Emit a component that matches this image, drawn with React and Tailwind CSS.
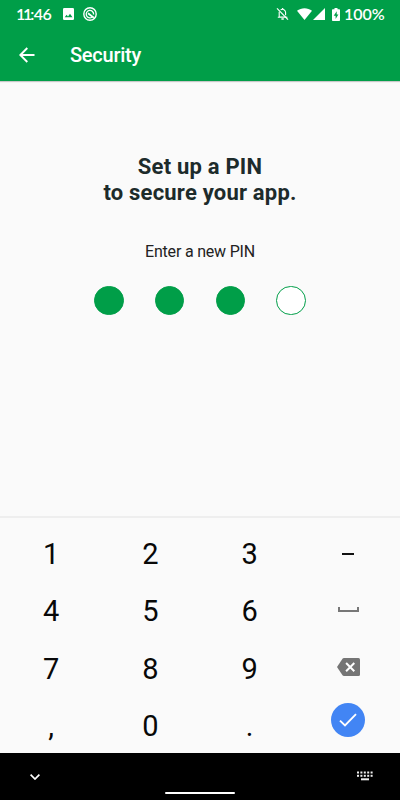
import React from 'react';

const ImageIcon = () => (
  <svg className="w-[11px] h-[12px]" viewBox="0 0 11 12" fill="none">
    <rect width="11" height="12" rx="1.3" fill="#fff" />
    <path d="M1.700 9.200 3.600 6.800l1.400 1.600 2-2.600 2.500 3.400z" fill="#009e48" />
  </svg>
);

const TargetIcon = () => (
  <svg className="w-[14px] h-[14px]" viewBox="0 0 14 14" fill="none" stroke="#fff">
    <circle cx="7" cy="7" r="6.200" strokeWidth="1.400" />
    <path d="M9 10.200A3.700 3.700 0 1 1 10.600 7.500" strokeWidth="1.300" />
    <path d="M5 6.200 10.800 10.800" strokeWidth="1.800" />
  </svg>
);

const BellOffIcon = () => (
  <svg className="w-[13px] h-[14px]" viewBox="0 0 13 14" fill="none" stroke="#fff">
    <path d="M3.200 4.700v5.300h7.200M4.600 2.900C7 1.400 9.600 3 9.600 5.600v2.600M1.800 10.200h9.600" strokeWidth="1.100" />
    <path d="M1 1.400l11 11.200" strokeWidth="1.200" />
    <path d="M5.400 12h2.400M6.600 1v1.200" strokeWidth="1.300" />
  </svg>
);

const WifiIcon = () => (
  <svg className="w-[15px] h-[12px]" viewBox="0 0 15 12" fill="#fff">
    <path d="M0 2.700C4.300-.7 10.700-.7 15 2.700L7.500 12z" />
  </svg>
);

const SignalIcon = () => (
  <svg className="w-[12px] h-[12px]" viewBox="0 0 12 12" fill="#fff">
    <path d="M12 0v12H0z" />
  </svg>
);

const BatteryIcon = () => (
  <svg className="w-[8px] h-[13px]" viewBox="0 0 8 13">
    <path d="M2.500 0h3v1.200H7.200a.8.8 0 0 1 .8.8v10.200a.8.8 0 0 1-.8.8H.8a.8.8 0 0 1-.8-.8V2a.8.8 0 0 1 .8-.8h1.700z" fill="#fff" />
    <path d="M4.700 3.300 1.700 7.800h1.900v3.100l2.800-4.500H4.700z" fill="#009e48" />
  </svg>
);

const BackIcon = () => (
  <svg className="w-4 h-4" viewBox="0 0 16 16" fill="none" stroke="#fff" strokeWidth="1.900">
    <path d="M15.500 8H1.500M8.300 1 1.300 8l7 7" />
  </svg>
);

const SpaceIcon = () => (
  <svg className="w-[21px] h-[5px] mb-[4px]" viewBox="0 0 21 5" fill="none" stroke="#777" strokeWidth="2">
    <path d="M1 0v4h19V0" />
  </svg>
);

const BackspaceIcon = () => (
  <svg className="w-[23px] h-[18px] mb-[4px]" viewBox="0 0 23 18">
    <path d="M7 0h14.500A1.500 1.500 0 0 1 23 1.500v15a1.500 1.500 0 0 1-1.500 1.500H7a2 2 0 0 1-1.500-.8L0 9 5.500.8A2 2 0 0 1 7 0z" fill="#757575" />
    <path d="m9.100 5 8.200 8.200M17.300 5l-8.200 8.200" stroke="#fff" strokeWidth="2" />
  </svg>
);

const CheckIcon = () => (
  <svg className="w-[18px] h-[14px]" viewBox="0 0 18 14" fill="none" stroke="#fff" strokeWidth="1.900">
    <path d="m1 7.600 5 4.900L17 1.200" />
  </svg>
);

const KeyboardIcon = () => (
  <svg className="w-4 h-[10px]" viewBox="0 0 16 10" fill="#eee">
    {[0, 3.4, 6.8, 10.2, 13.6].map((x) => (
      <React.Fragment key={x}>
        <rect x={x} y="0.500" width="2" height="2" />
        <rect x={x} y="3.800" width="2" height="2" />
      </React.Fragment>
    ))}
    <rect x="4" y="7.300" width="8" height="2" />
  </svg>
);

const keys = [
  '1', '2', '3', <div className="w-3 h-[2px] mb-[2px] bg-[#111]" />,
  '4', '5', '6', <SpaceIcon />,
  '7', '8', '9', <BackspaceIcon />,
  ',', '0', '.',
  <div className="w-[34px] h-[34px] mb-[13px] rounded-full bg-[#4285f4] flex items-center justify-center">
    <CheckIcon />
  </div>
];

const App = () => {
  const pin = [true, true, true, false];

  return (
    <div className="w-[400px] h-[800px] flex flex-col overflow-hidden bg-[#fafafa] font-['Roboto',sans-serif]">
      <header className="h-[81px] shrink-0 bg-[#009e48] text-white shadow-[0_1px_1px_rgba(0,0,0,0.2)]">
        <div className="h-7 flex items-center pl-4 pr-4 font-['Lato',sans-serif] font-semibold text-base">
          <span className="w-[47px] leading-7 tracking-[-0.5px]"><span className="tracking-[-2.2px]">11</span>:46</span>
          <ImageIcon />
          <span className="w-[9px]" />
          <TargetIcon />
          <div className="ml-auto flex items-center">
            <BellOffIcon />
            <span className="w-[8px]" />
            <WifiIcon />
            <span className="w-[1px]" />
            <SignalIcon />
            <span className="w-[7px]" />
            <BatteryIcon />
            <span className="w-[40px] ml-[4px] whitespace-nowrap">100%</span>
          </div>
        </div>
        <div className="h-[53px] flex items-center pl-[19px]">
          <BackIcon />
          <h1 className="ml-[35px] text-xl font-medium tracking-[-0.25px]">Security</h1>
        </div>
      </header>

      <main className="flex-1 flex flex-col items-center pt-[73px]">
        <h2 className="text-[22px] leading-[26px] font-bold tracking-[0.2px] text-center text-[#1d2b2b]">
          Set up a PIN<br />to secure your app.
        </h2>
        <p className="mt-[34px] text-base leading-6 tracking-[-0.2px] text-[#222]">Enter a new PIN</p>
        <div className="mt-[22px] flex gap-[31.400px]">
          {pin.map((filled, idx) => (
            <div
              key={idx}
              className={`w-[29.400px] h-[29.400px] rounded-full border border-[#009e48] ${filled ? 'bg-[#009e48]' : 'bg-white'}`}
            />
          ))}
        </div>
      </main>

      {/* Numeric keyboard */}
      <div className="h-[237px] shrink-0 border-t-2 border-[#eee] pt-[8px] pl-px pr-[2px]">
        <div className="grid grid-cols-4 auto-rows-[57.3px]">
          {keys.map((key, idx) => (
            <div key={idx} className="flex items-center justify-center text-[29px] leading-none text-[#080808]">
              {typeof key === 'string' ? <span className="pl-px">{key}</span> : key}
            </div>
          ))}
        </div>
      </div>

      <nav className="h-[47px] shrink-0 bg-black flex justify-between pl-[30px] pr-[27px]">
        <svg className="w-[10px] h-[6px] mt-[21px]" viewBox="0 0 10 6" fill="none" stroke="#fff" strokeWidth="1.700">
          <path d="m.6.600 4.400 4.400L9.400.6" />
        </svg>
        <div className="w-[70px] h-[2px] mt-[39px] rounded-full bg-white ml-[2px]" />
        <div className="mt-[18px]">
          <KeyboardIcon />
        </div>
      </nav>
    </div>
  );
};

export default App;
